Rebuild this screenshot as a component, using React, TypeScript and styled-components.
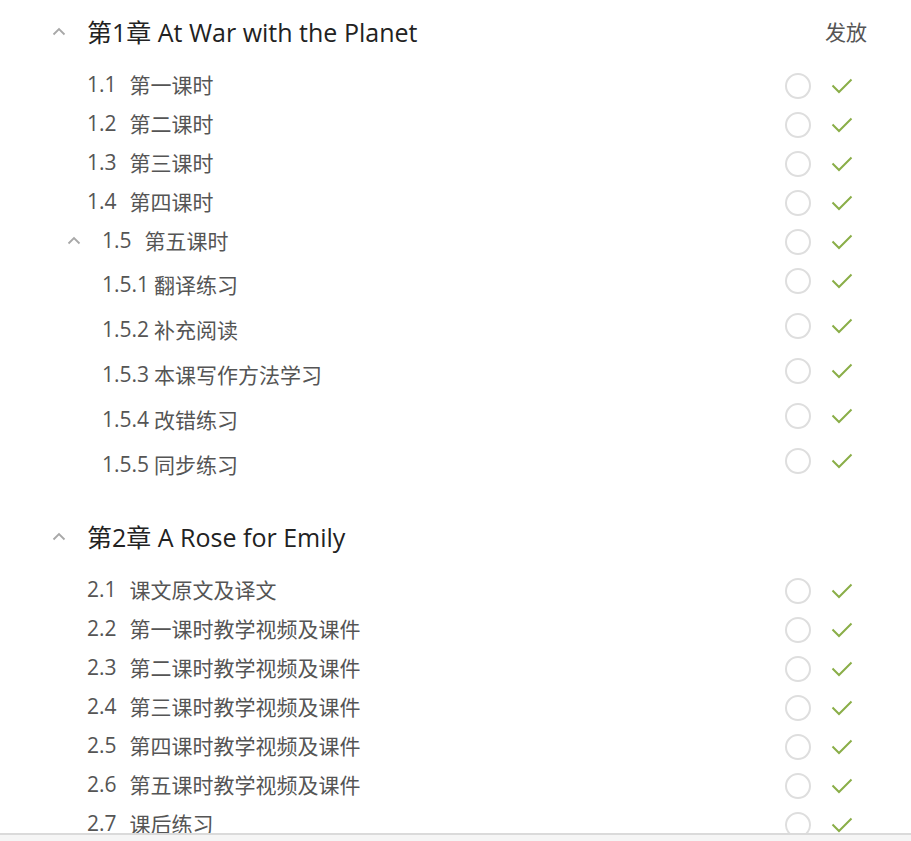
import styled, { createGlobalStyle } from 'styled-components';

const GlobalStyle = createGlobalStyle`
  html, body {
    margin: 0;
    padding: 0;
    background: #fff;
  }
  body {
    font-family: "Open Sans", "Noto Sans CJK SC", sans-serif;
  }
`;

interface Lesson {
  no: string;
  title: string;
  expanded?: boolean;
  children?: Lesson[];
}

interface Chapter {
  title: string;
  lessons: Lesson[];
}

const chapters: Chapter[] = [
  {
    title: '第1章 At War with the Planet',
    lessons: [
      { no: '1.1', title: '第一课时' },
      { no: '1.2', title: '第二课时' },
      { no: '1.3', title: '第三课时' },
      { no: '1.4', title: '第四课时' },
      {
        no: '1.5',
        title: '第五课时',
        expanded: true,
        children: [
          { no: '1.5.1', title: '翻译练习' },
          { no: '1.5.2', title: '补充阅读' },
          { no: '1.5.3', title: '本课写作方法学习' },
          { no: '1.5.4', title: '改错练习' },
          { no: '1.5.5', title: '同步练习' },
        ],
      },
    ],
  },
  {
    title: '第2章 A Rose for Emily',
    lessons: [
      { no: '2.1', title: '课文原文及译文' },
      { no: '2.2', title: '第一课时教学视频及课件' },
      { no: '2.3', title: '第二课时教学视频及课件' },
      { no: '2.4', title: '第三课时教学视频及课件' },
      { no: '2.5', title: '第四课时教学视频及课件' },
      { no: '2.6', title: '第五课时教学视频及课件' },
      { no: '2.7', title: '课后练习' },
    ],
  },
];

const Page = styled.div`
  height: 100vh;
  display: flex;
  flex-direction: column;
`;

const Scroller = styled.div`
  flex: 1;
  overflow: hidden;
`;

const Footer = styled.div`
  height: 6px;
  flex-shrink: 0;
  border-top: 2px solid #dadada;
  background: #f5f5f5;
`;

const Section = styled.section<{ $gap?: boolean }>`
  margin-top: ${({ $gap }) => ($gap ? '27px' : '8px')};
`;

const ChapterHeader = styled.div`
  height: 46px;
  display: flex;
  align-items: center;
  padding: 0 44px 0 52px;
`;

const ChapterTitle = styled.h2`
  flex: 1;
  margin: 0 0 0 21px;
  font-size: 25px;
  font-weight: 400;
  color: #222;
  white-space: nowrap;
`;

const ColumnLabel = styled.span`
  font-size: 21px;
  color: #555;
`;

const Caret = styled.svg<{ $inline?: boolean }>`
  width: 14px;
  height: 9px;
  flex-shrink: 0;
  display: block;
  ${({ $inline }) => ($inline ? 'margin: 2px 21px 0 -35px;' : '')}
`;

const List = styled.ul`
  list-style: none;
  margin: 12px 0 0;
  padding: 0;
`;

const Row = styled.li<{ $indent: number; $tall?: boolean }>`
  height: ${({ $tall }) => ($tall ? '45px' : '39px')};
  display: flex;
  align-items: center;
  padding: 0 58px 0 ${({ $indent }) => $indent}px;
  font-size: 21px;
  color: #555;
  white-space: nowrap;
`;

const Label = styled.span<{ $tall?: boolean }>`
  flex: 1;
  display: flex;
  align-items: center;
  margin-top: ${({ $tall }) => ($tall ? '0' : '-4px')};
`;

const Num = styled.span<{ $wide?: boolean }>`
  margin-right: ${({ $wide }) => ($wide ? '5px' : '13px')};
`;

const Actions = styled.div<{ $raised?: boolean }>`
  display: flex;
  align-items: center;
  gap: 20px;
  margin-bottom: ${({ $raised }) => ($raised ? '6px' : '0')};
`;

const Ring = styled.span`
  width: 22px;
  height: 22px;
  border: 2px solid #dedede;
  border-radius: 50%;
`;

const Check = styled.svg`
  width: 22px;
  height: 16px;
  display: block;
`;

const CaretIcon = ({ inline }: { inline?: boolean }) => (
  <Caret $inline={inline} viewBox="0 0 14 9" aria-hidden="true">
    <path d="M1.5 7.5L7 2l5.5 5.5" fill="none" stroke="#a8a8a8" strokeWidth="1.8" />
  </Caret>
);

const RowActions = ({ raised }: { raised?: boolean }) => (
  <Actions $raised={raised}>
    <Ring />
    <Check viewBox="0 0 22 16" aria-hidden="true">
      <path
        d="M1.5 7.5l6.5 6.5L20.5 1.5"
        fill="none"
        stroke="#8aae48"
        strokeWidth="2"
      />
    </Check>
  </Actions>
);

const LessonRow = ({ lesson, depth }: { lesson: Lesson; depth: number }) => {
  const sub = depth > 0;
  return (
    <>
      <Row $indent={sub || lesson.expanded ? 102 : 87} $tall={sub}>
        <Label $tall={sub}>
          {lesson.expanded && <CaretIcon inline />}
          <Num $wide={sub}>{lesson.no}</Num>
          {lesson.title}
        </Label>
        <RowActions raised={sub} />
      </Row>
      {lesson.expanded &&
        lesson.children?.map((c) => (
          <LessonRow key={c.no} lesson={c} depth={depth + 1} />
        ))}
    </>
  );
};

export default function App() {
  return (
    <Page>
      <GlobalStyle />
      <Scroller>
        {chapters.map((ch, i) => (
          <Section key={ch.title} $gap={i > 0}>
            <ChapterHeader>
              <CaretIcon />
              <ChapterTitle>{ch.title}</ChapterTitle>
              {i === 0 && <ColumnLabel>发放</ColumnLabel>}
            </ChapterHeader>
            <List>
              {ch.lessons.map((l) => (
                <LessonRow key={l.no} lesson={l} depth={0} />
              ))}
            </List>
          </Section>
        ))}
      </Scroller>
      <Footer />
    </Page>
  );
}
